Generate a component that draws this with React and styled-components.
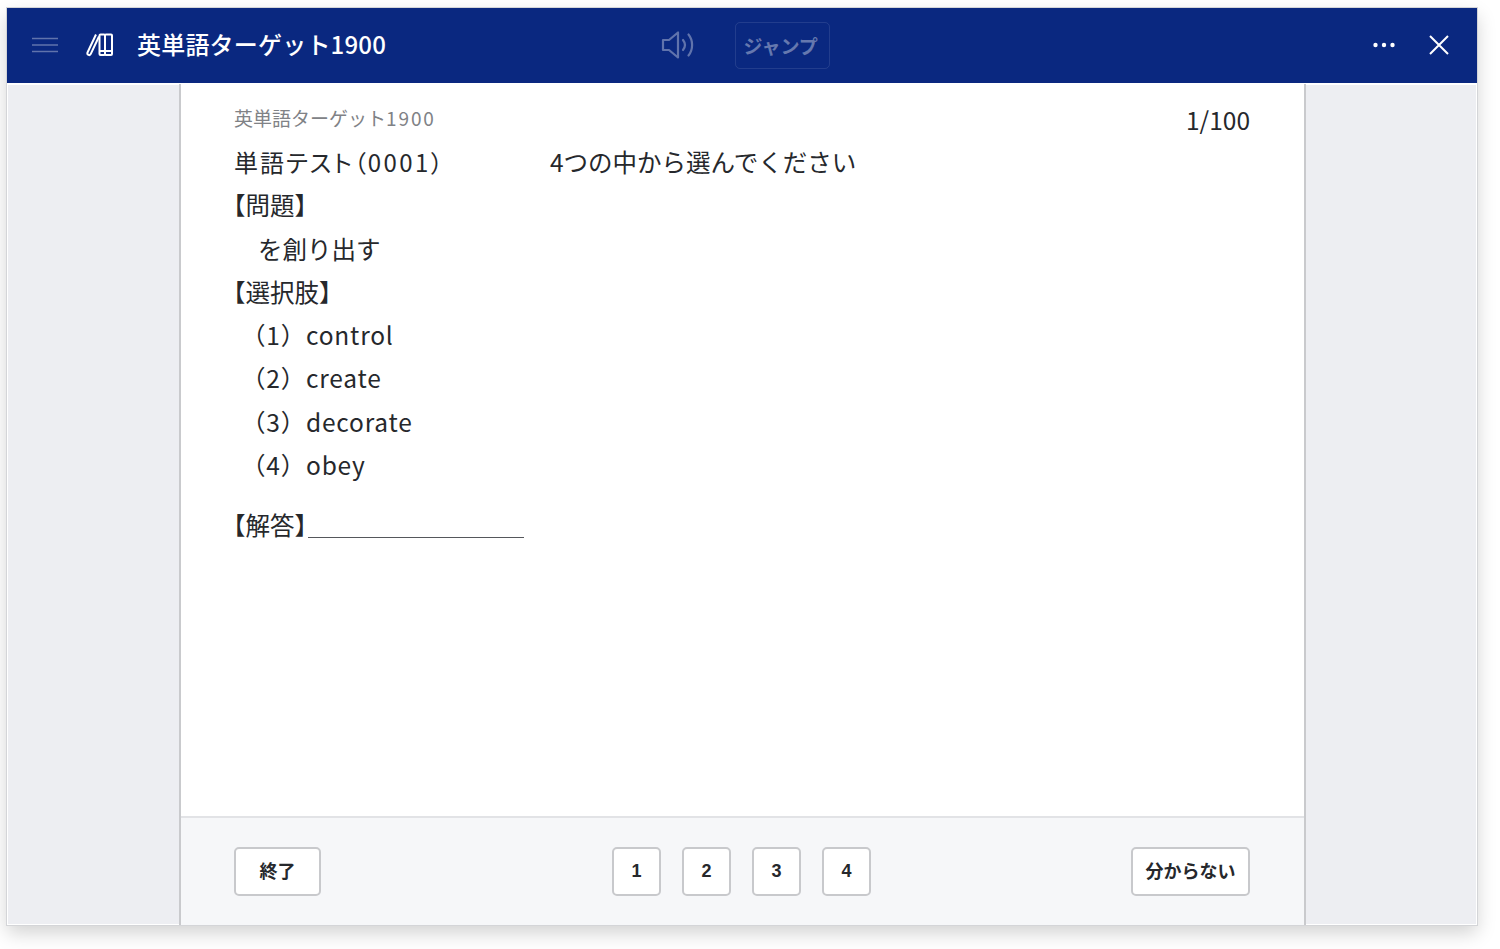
import React from 'react'
import styled, { createGlobalStyle } from 'styled-components'

const GlobalStyle = createGlobalStyle`
  html, body {
    margin: 0;
    padding: 0;
    background: #fff;
  }
  body {
    font-family: "Noto Sans CJK JP", "Noto Sans", sans-serif;
    color: #26282c;
  }
`
const Page = styled.div`
  width: 1500px;
  height: 949px;
  padding: 8px 23px 24px 7px;
  box-sizing: border-box;
  overflow: hidden;
`
const Window = styled.div`
  height: 917px;
  display: flex;
  flex-direction: column;
  box-shadow: 0 8px 18px rgba(0, 0, 0, 0.18);
  outline: 1px solid #d4d5d8;
`
const Header = styled.header`
  height: 75px;
  flex: none;
  box-sizing: border-box;
  background: #0a2880;
  display: flex;
  align-items: center;
  color: #fff;
  padding: 0 28px 2px 25px;
`
const IconSlot = styled.span`
  display: flex;
  align-items: center;
  justify-content: center;
  margin-left: ${({$ml}) => $ml || 0}px;
  opacity: ${({$dim}) => ($dim ? 0.35 : 1)};
`
const HeaderTitle = styled.h1`
  margin: 0 0 2px 23px;
  font-size: 24px;
  font-weight: 500;
  letter-spacing: 0.2px;
  line-height: 1;
`
const HeaderCenter = styled.div`
  display: flex;
  align-items: center;
  margin-left: 275px;
`
const JumpButton = styled.button`
  width: 95px;
  height: 47px;
  margin: 1px 0 0 40px;
  background: transparent;
  border: 1px solid rgba(255, 255, 255, 0.1);
  border-radius: 5px;
  color: rgba(255, 255, 255, 0.38);
  font: 700 19px "Noto Sans CJK JP", sans-serif;
  padding: 0 4px 0 0;
`
const HeaderRight = styled.div`
  margin-left: auto;
  display: flex;
  align-items: center;
  gap: 34px;
`
const Body = styled.div`
  flex: 1;
  min-height: 0;
  display: flex;
  background: #edeef2;
  border-top: 1px solid #fff;
  box-shadow: inset 0 0 0 1px #fff;
`
const Side = styled.div`
  flex: none;
  width: ${({$w}) => $w}px;
`
const Paper = styled.main`
  flex: 1;
  min-width: 0;
  display: flex;
  flex-direction: column;
  background: #fff;
  border-left: 2px solid #c9cacd;
  border-right: 2px solid #c9cacd;
`
const Content = styled.section`
  flex: 1;
  padding: 20px 54px 0 53px;
  position: relative;
  font-size: 24.5px;
  line-height: 43.3px;
`
const Counter = styled.div`
  position: absolute;
  top: 17px;
  right: 54px;
  font-size: 24.5px;
  line-height: 38px;
`
const Caption = styled.div`
  font-size: 19px;
  line-height: 28px;
  color: #808286;
  margin-bottom: 8px;
`
const Digits = styled.span`
  letter-spacing: 0.1em;
`
const TitleRow = styled.div`
  display: flex;
`
const TitleCell = styled.div`
  width: 316px;
  font-size: 24px;
  font-feature-settings: "palt";
  letter-spacing: 2px;
`
const Line = styled.div`
  padding-left: ${({$indent}) => $indent}px;
  letter-spacing: ${({$spread}) => ($spread ? '0.8px' : 'normal')};
  white-space: pre;
`
const Heading = styled.div`
  margin-left: -13px;
`
const Answer = styled.div`
  display: flex;
  align-items: flex-start;
  margin-top: 17px;
  margin-left: -13px;
`
const AnswerLine = styled.span`
  width: 216px;
  height: 34px;
  margin-left: -11px;
  border-bottom: 1px solid #55575b;
`
const Footer = styled.footer`
  height: 109px;
  flex: none;
  box-sizing: border-box;
  background: #f6f7f9;
  border-top: 2px solid #e2e3e6;
  display: grid;
  grid-template-columns: 1fr auto 1fr;
  align-items: center;
  padding: 0 54px 0 53px;
`
const KeyGroup = styled.div`
  display: flex;
  gap: 21px;
  margin-right: 1px;
`
const Button = styled.button`
  width: ${({$w}) => $w}px;
  height: 49px;
  box-sizing: border-box;
  background: #fff;
  border: 2px solid #c8c9cc;
  border-radius: 5px;
  color: #26282c;
  font: 700 18px "Noto Sans CJK JP", "Liberation Sans", sans-serif;
  padding: 0 0 3px;
  justify-self: ${({$end}) => ($end ? 'end' : 'start')};
`
const NumberButton = styled(Button)`
  font-family: "Liberation Sans", sans-serif;
  padding: 0;
`

const MenuIcon = () => (
  <svg width="26" height="16" viewBox="0 0 26 16" fill="none" stroke="#fff" strokeWidth="1.6">
    <path d="M0 1.5h26M0 8h26M0 14.5h26" />
  </svg>
)
const BooksIcon = () => (
  <svg width="28" height="24" viewBox="0 0 28 24" fill="none" stroke="#fff" strokeWidth="2" strokeLinejoin="round">
    <path d="M10 1.500 1.500 19.500c-.5 1.200 0 2 1 2.400.9.4 1.800.1 2.300-1L13 3.500" />
    <rect x="13.500" y="1.500" width="5.500" height="20.500" rx="1" />
    <rect x="19" y="1.500" width="7" height="20.500" rx="1" />
    <path d="M13.500 18h12.500" />
  </svg>
)
const SpeakerIcon = () => (
  <svg width="34" height="30" viewBox="0 0 34 30" fill="none" stroke="#fff" strokeWidth="2.2" strokeLinejoin="round" strokeLinecap="round">
    <path d="M2 10h6l9-7.500v25L8 20H2z" />
    <path d="M22 10c2.400 3 2.400 7 0 10M27.500 4.500c4.800 5.800 4.800 15.200 0 21" />
  </svg>
)
const MoreIcon = () => (
  <svg width="22" height="6" viewBox="0 0 22 6" fill="#fff">
    <circle cx="2.500" cy="3" r="2.200" />
    <circle cx="11" cy="3" r="2.200" />
    <circle cx="19.500" cy="3" r="2.200" />
  </svg>
)
const CloseIcon = () => (
  <svg width="20" height="20" viewBox="0 0 20 20" fill="none" stroke="#fff" strokeWidth="2">
    <path d="M1 1l18 18M19 1 1 19" />
  </svg>
)

const choices = ['（1）control', '（2）create', '（3）decorate', '（4）obey']

export default function App() {
  return (
    <Page>
      <GlobalStyle />
      <Window>
        <Header>
          <IconSlot $dim><MenuIcon /></IconSlot>
          <IconSlot $ml={28}><BooksIcon /></IconSlot>
          <HeaderTitle>英単語ターゲット1900</HeaderTitle>
          <HeaderCenter>
            <IconSlot $dim><SpeakerIcon /></IconSlot>
            <JumpButton>ジャンプ</JumpButton>
          </HeaderCenter>
          <HeaderRight>
            <MoreIcon />
            <CloseIcon />
          </HeaderRight>
        </Header>
        <Body>
          <Side $w={172} />
          <Paper>
            <Content>
              <Counter>1/100</Counter>
              <Caption>英単語ターゲット<Digits>1900</Digits></Caption>
              <TitleRow>
                <TitleCell>単語テスト（<Digits>0001</Digits>）</TitleCell>
                <div>4つの中から選んでください</div>
              </TitleRow>
              <Heading>【問題】</Heading>
              <Line $indent={24}>を創り出す</Line>
              <Heading>【選択肢】</Heading>
              {choices.map(c => (
                <Line key={c} $indent={7} $spread>{c}</Line>
              ))}
              <Answer>
                <span>【解答】</span>
                <AnswerLine />
              </Answer>
            </Content>
            <Footer>
              <Button $w={87}>終了</Button>
              <KeyGroup>
                {[1, 2, 3, 4].map(n => (
                  <NumberButton key={n} $w={49}>{n}</NumberButton>
                ))}
              </KeyGroup>
              <Button $w={119} $end>分からない</Button>
            </Footer>
          </Paper>
          <Side $w={171} />
        </Body>
      </Window>
    </Page>
  )
}
